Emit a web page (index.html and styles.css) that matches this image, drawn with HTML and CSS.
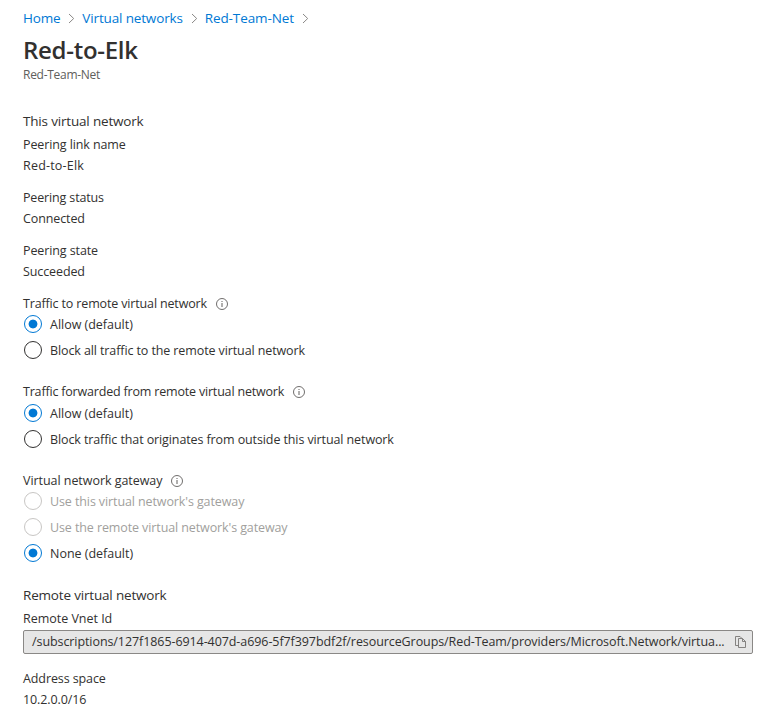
FILE: index.html
```
<!DOCTYPE html>
<html lang="en">
<head>
<meta charset="utf-8">
<title>Red-to-Elk</title>
<link rel="stylesheet" href="styles.css">
</head>
<body>
<svg class="defs" width="0" height="0" aria-hidden="true">
  <symbol id="chevron" viewBox="0 0 7 11"><path d="M1 1l4.7 4.500L1 10" fill="none" stroke="#8a8886"/></symbol>
  <symbol id="info" viewBox="0 0 12 12"><circle cx="6" cy="6" r="5.500" fill="none" stroke="#605e5c" stroke-width=".9"/><path d="M6 5v4M6 3v1" stroke="#605e5c" fill="none"/></symbol>
  <symbol id="copy" viewBox="0 0 11 12"><path d="M3.500 9.500h-3v-9h4.500l1.500 1.500M3.500 2.500h4l3 3v6h-7zM7.500 2.500v3h3" fill="none" stroke="#797775" stroke-width=".9"/></symbol>
</svg>
<main class="page">
  <nav class="breadcrumb">
    <a class="crumb-home">Home</a><svg class="chevron"><use href="#chevron"/></svg>
    <a class="crumb-networks">Virtual networks</a><svg class="chevron"><use href="#chevron"/></svg>
    <a class="crumb-team">Red-Team-Net</a><svg class="chevron"><use href="#chevron"/></svg>
  </nav>
  <h1>Red-to-Elk</h1>
  <p class="subtitle">Red-Team-Net</p>

  <section class="local">
    <h2>This virtual network</h2>
    <dl><dt>Peering link name</dt><dd class="loose">Red-to-Elk</dd></dl>
    <dl><dt class="tight">Peering status</dt><dd>Connected</dd></dl>
    <dl><dt>Peering state</dt><dd>Succeeded</dd></dl>
  </section>

  <section class="options to-remote">
    <h3 class="tight"><span>Traffic to remote virtual network</span><svg class="info"><use href="#info"/></svg></h3>
    <label class="checked"><i></i><span>Allow (default)</span></label>
    <label><i></i><span>Block all traffic to the remote virtual network</span></label>
  </section>
  <section class="options forwarded">
    <h3 class="tighter"><span>Traffic forwarded from remote virtual network</span><svg class="info"><use href="#info"/></svg></h3>
    <label class="checked"><i></i><span>Allow (default)</span></label>
    <label><i></i><span>Block traffic that originates from outside this virtual network</span></label>
  </section>
  <section class="options gateway">
    <h3><span>Virtual network gateway</span><svg class="info"><use href="#info"/></svg></h3>
    <label class="disabled"><i></i><span>Use this virtual network's gateway</span></label>
    <label class="disabled"><i></i><span>Use the remote virtual network's gateway</span></label>
    <label class="checked"><i></i><span>None (default)</span></label>
  </section>

  <section class="remote">
    <h2>Remote virtual network</h2>
    <p class="field-label">Remote Vnet Id</p>
    <div class="field"><span class="path">/subscriptions/127f1865-6914-407d-a696-5f7f397bdf2f/resourceGroups/Red-Team/providers/Microsoft.Network/virtua...</span><svg class="copy"><use href="#copy"/></svg></div>
    <dl><dt>Address space</dt><dd>10.2.0.0/16</dd></dl>
  </section>
</main>
</body>
</html>
```
FILE: styles.css
```
* { box-sizing: border-box; }
body { margin: 0; background: #fff; color: #323130; font: 12.5px/21px "Open Sans", "Noto Sans", sans-serif; letter-spacing: -.105px; white-space: nowrap; }
h1, h2, h3, p, dl, dd { margin: 0; font-weight: 400; }
.defs { position: absolute; }
.page { padding: 7px 17px 0 23px; }
.breadcrumb { display: flex; align-items: center; height: 22px; font-size: 13.5px; letter-spacing: -.15px; color: #0078d4; }
.crumb-home { letter-spacing: -.2px; }
.crumb-team { letter-spacing: -.1px; }
.chevron { width: 7px; height: 11px; margin: 0 7px 0 8px; flex: none; }
h1 { height: 38px; margin-top: 2px; font-size: 24px; line-height: 38px; font-weight: 600; letter-spacing: -.28px; }
.subtitle { height: 16px; margin-top: -2px; font-size: 12px; line-height: 16px; letter-spacing: -.28px; color: #605e5c; }
h2 { font-size: 13.5px; height: 24px; line-height: 22px; letter-spacing: -.18px; }
h3 { display: flex; align-items: center; font-size: 12.5px; height: 20px; }
.local { margin-top: 27px; }
dl { height: 53px; }
dt, dd { height: 21px; }
.loose { letter-spacing: .2px; }
.tight { letter-spacing: -.15px; }
.tighter { letter-spacing: -.185px; }
.info { width: 12px; height: 12px; margin: 1px 0 0 9px; }
.options label { display: flex; align-items: center; height: 26px; margin-top: -2px; }
.options label + label { margin-top: 0; }
.options i { width: 18px; height: 18px; border: 1px solid #323130; border-radius: 50%; margin: 0 8px 0 1px; flex: none; }
.options .checked { letter-spacing: -.02px; }
.options .checked i { border-color: #0078d4; background: radial-gradient(circle, #0078d4 4px, transparent 4.8px); }
.disabled { color: #a19f9d; }
.options .disabled i { border-color: #c8c6c4; }
.to-remote { height: 88px; }
.forwarded { height: 89px; }
.forwarded h3 { height: 21px; padding-bottom: 1px; }
.gateway { height: 114px; }
.gateway h3 { letter-spacing: -.05px; }
.field-label { height: 22px; letter-spacing: -.02px; }
.field { display: flex; align-items: center; height: 24px; width: 730px; border: 1px solid #8a8886; border-radius: 2px; background: #e6e6e6; padding: 0 6px 0 8px; margin-bottom: 14px; }
.path { letter-spacing: -.08px; margin-top: -2px; }
.copy { width: 11px; height: 12px; margin-left: auto; }
```
